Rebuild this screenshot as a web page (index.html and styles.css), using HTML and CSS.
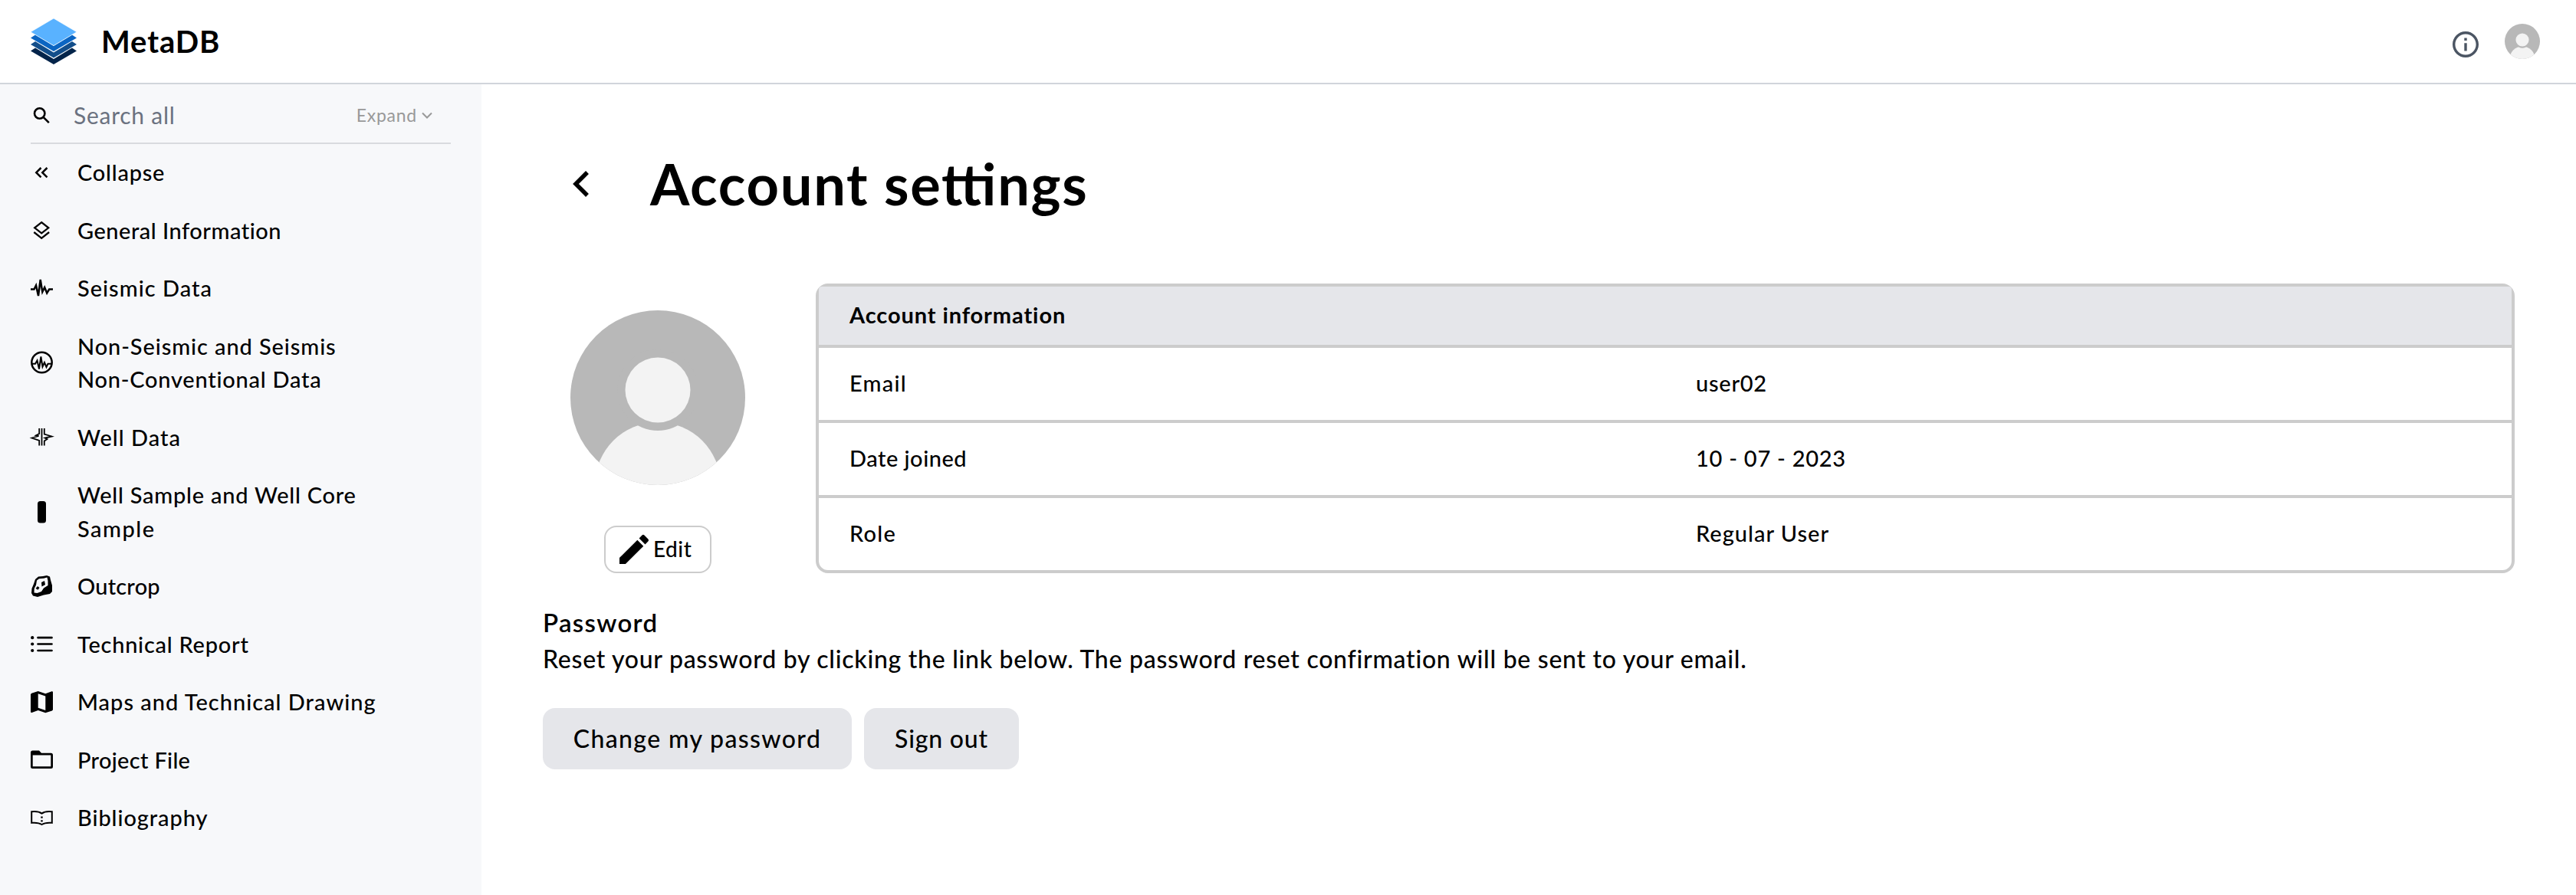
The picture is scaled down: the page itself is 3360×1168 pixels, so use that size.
FILE: index.html
```html
<!DOCTYPE html>
<html lang="en">
<head>
<meta charset="utf-8">
<title>MetaDB - Account settings</title>
<link rel="stylesheet" href="styles.css">
</head>
<body>
<svg class="defs" aria-hidden="true">
  <symbol id="person" viewBox="0 0 228 228">
    <clipPath id="disc"><circle cx="114" cy="114" r="114"/></clipPath>
    <g clip-path="url(#disc)">
      <rect width="228" height="228" fill="#b8b8b8"/>
      <circle cx="114" cy="228" r="82" fill="#f3f3f3"/>
      <rect x="32" y="228" width="164" height="10" fill="#f3f3f3"/>
      <circle cx="114" cy="104" r="53" fill="#b8b8b8"/>
      <circle cx="114" cy="104" r="42.5" fill="#f3f3f3"/>
    </g>
  </symbol>
</svg>

<header class="topbar">
  <a class="brand">
    <svg class="logo" viewBox="0 0 60 60">
      <path fill="#04244a" d="M0 42.500 6 38.500 30 53 54 38.500 60 42.500 30 60z"/>
      <path fill="#134e8a" d="M0 34 6 30 30 44.500 54 30 60 34 30 51.500z"/>
      <path fill="#0b65c2" d="M0 25.500 6 21.500 30 36 54 21.500 60 25.500 30 43z"/>
      <path fill="#59b2ff" stroke="#fff" stroke-width=".6" d="M30 0 60 17.700 30 35.500 0 17.700z"/>
    </svg>
    <span class="brand-name">MetaDB</span>
  </a>
  <div class="top-actions">
    <svg class="info" viewBox="2 2 20 20"><path d="M11 7h2v2h-2zm0 4h2v6h-2zm1-9C6.480 2 2 6.480 2 12s4.480 10 10 10 10-4.480 10-10S17.520 2 12 2zm0 18c-4.410 0-8-3.590-8-8s3.590-8 8-8 8 3.590 8 8-3.590 8-8 8z"/></svg>
    <svg class="avatar-small"><use href="#person"/></svg>
  </div>
</header>

<div class="layout">
  <nav class="sidebar">
    <div class="search">
      <svg class="icon" viewBox="0 0 28 28"><g fill="none" stroke="#000" stroke-width="2.600"><circle cx="11.700" cy="11" r="6.700"/><path d="M16.500 15.800 23.800 23.200"/></g></svg>
      <span class="search-label">Search all</span>
      <span class="expand">Expand</span>
      <svg class="expand-icon" viewBox="0 0 14 10"><path d="M1 1.500 7 7.500 13 1.500" fill="none" stroke="#999" stroke-width="2"/></svg>
    </div>
    <ul class="menu">
      <li><svg class="icon" viewBox="0 0 28 28"><path d="M13.500 8 7.300 14.200 13.500 20.400M21.500 8 15.300 14.200 21.500 20.400" fill="none" stroke="#000" stroke-width="2.500"/></svg><span class="t-75">Collapse</span></li>
      <li><svg class="icon" viewBox="0 0 28 28"><path d="M14.200 4.200 23.200 11.300 14.200 18.400 5.200 11.300zM4.300 17 14.200 24.800 24.100 17" fill="none" stroke="#000" stroke-width="2.300"/></svg><span class="t-50">General Information</span></li>
      <li><svg class="icon" viewBox="0 0 28 28"><path d="M0 15.500H4.500L7 10.500 10 24 12.700 3 15.300 19 18.200 13 21.200 20.500 24.200 15.500H29" fill="none" stroke="#000" stroke-width="2.500"/></svg><span class="t-100">Seismic Data</span></li>
      <li><svg class="icon" viewBox="0 0 28 28"><circle cx="14.500" cy="14" r="13.200" fill="none" stroke="#000" stroke-width="2.500"/><path d="M2 15.800H6L8.500 11.500 11 22.500 13.400 6.500 15.500 19.500 18 14 20.500 20 22.500 15.800H27" fill="none" stroke="#000" stroke-width="2"/></svg><span class="t-90"><span>Non-Seismic and Seismis</span><br><span class="t-75">Non-Conventional Data</span></span></li>
      <li><svg class="icon" viewBox="0 0 28 28"><path d="M14.500 3V25.500M11.200 3V10L7 12.200 10.500 13 1.500 15.500 11.200 19V25.500M17.800 3V10.500L27.500 13.500 18.500 15.500 21.500 17 17.800 19.500V25.500" fill="none" stroke="#000" stroke-width="1.800"/></svg><span class="t-100">Well Data</span></li>
      <li><svg class="icon" viewBox="0 0 28 28"><rect x="9" y="0" width="11" height="28.600" rx="3.500"/></svg><span class="t-75">Well Sample and Well Core<br><span class="t-140">Sample</span></span></li>
      <li><svg class="icon" viewBox="0 0 28 28"><path d="M6 5 10 1.500 16 1 21 0 25 1.500 26 6 28 13 28 21 25 24 17 25.500 9 28 3 26.500 1 23 1.500 17 4 11z"/><path fill="#f7f8fa" d="M8 6.500 11 4.200 17 3.800 21.500 2.500 22.500 7 22.500 13 17 16.500 14 21 8.500 23 4.500 22.500 4.700 17 7 12.500z"/><path d="M14 9 18 7 19 12 14.500 14.500zM9 14 11.500 16 9.500 18.700 6.500 17z"/></svg><span class="t-20">Outcrop</span></li>
      <li><svg class="icon" viewBox="0 0 28 28"><g stroke="#000" stroke-width="2.700" stroke-linecap="round"><path d="M9.500 6.200H27.500M9.500 14.500H27.500M9.500 23H27.500"/></g><circle cx="2.200" cy="6.200" r="2.100"/><circle cx="2.200" cy="14.500" r="2.100"/><circle cx="2.200" cy="23" r="2.100"/></svg><span class="t-75">Technical Report</span></li>
      <li><svg class="icon" viewBox="0 0 28 28"><path fill-rule="evenodd" d="M1.200 2.700 9.700 0 19.300 3.300 27.500 .2Q29 0 29 1.200V24.300L28 25.500 19.300 28.200 9.700 24.900 1.500 28Q0 28.200 0 27V4zM9.700 3.200V21.700L19.300 25V6.500z"/></svg><span class="t-100">Maps and Technical Drawing</span></li>
      <li><svg class="icon" viewBox="0 0 28 28"><path fill-rule="evenodd" d="M2.500 2.500H11L14 5.800H26.500Q29 5.800 29 8.300V23.500Q29 26 26.500 26H2.500Q0 26 0 23.500V5Q0 2.500 2.500 2.500zM2.700 8.500V23.300H26.300V8.500z"/></svg><span class="t-30">Project File</span></li>
      <li><svg class="icon" viewBox="0 0 28 28"><path d="M1.200 6.200Q10 5.200 14.500 8.600 19 5.200 27.800 6.200V20.800Q19 20 14.500 23 10 20 1.200 20.800z" fill="none" stroke="#000" stroke-width="2"/><path d="M13.300 12.500h2.400v2.300h-2.400zM13.300 17.300h2.400v2.300h-2.400z"/></svg><span class="t-90">Bibliography</span></li>
    </ul>
  </nav>

  <main class="content">
    <div class="heading">
      <svg class="back" viewBox="0 0 22 34"><path d="M19 2 4 17 19 32" fill="none" stroke="#000" stroke-width="5.500"/></svg>
      <h1>Account settings</h1>
    </div>

    <section class="account">
      <div class="profile">
        <svg class="avatar"><use href="#person"/></svg>
        <button class="edit">
          <svg class="pencil" viewBox="3 3 18 18"><path d="M3 17.250V21h3.750L17.810 9.930l-3.750-3.750L3 17.250zM20.710 7.040a1 1 0 0 0 0-1.410l-2.340-2.340a1 1 0 0 0-1.410 0l-1.830 1.830 3.750 3.750 1.830-1.830z"/></svg>
          <span>Edit</span>
        </button>
      </div>
      <div class="info-table">
        <div class="row head"><span class="t-90">Account information</span></div>
        <div class="row"><span class="t-120">Email</span><span class="t-75">user02</span></div>
        <div class="row"><span class="t-50">Date joined</span><span class="t-75">10 - 07 - 2023</span></div>
        <div class="row"><span class="t-120">Role</span><span class="t-100">Regular User</span></div>
      </div>
    </section>

    <section class="password">
      <h2>Password</h2>
      <p>Reset your password by clicking the link below. The password reset confirmation will be sent to your email.</p>
      <div class="buttons">
        <button class="btn btn-change">Change my password</button>
        <button class="btn btn-signout">Sign out</button>
      </div>
    </section>
  </main>
</div>
</body>
</html>
```
FILE: styles.css
```css
* { box-sizing: border-box; }

body {
  margin: 0;
  min-height: 1168px;
  display: flex;
  flex-direction: column;
  background: #fff;
  color: #000;
  font-family: Lato, "Open Sans", sans-serif;
  font-size: 29px;
  font-weight: 500;
  line-height: 43.5px;
}

h1, h2, p, ul { margin: 0; padding: 0; }
svg { display: block; flex: none; overflow: visible; }
button { font: inherit; color: inherit; }
.defs { position: absolute; width: 0; height: 0; }

/* letter spacing steps */
.t-20 { letter-spacing: .2px; }
.t-30 { letter-spacing: .3px; }
.t-50 { letter-spacing: .5px; }
.t-75 { letter-spacing: .75px; }
.t-90 { letter-spacing: .9px; }
.t-100 { letter-spacing: 1px; }
.t-120 { letter-spacing: 1.25px; }
.t-140 { letter-spacing: 1.5px; }

/* top bar */
.topbar {
  height: 110px;
  padding: 0 47px 0 40px;
  display: flex;
  align-items: center;
  justify-content: space-between;
  border-bottom: 2px solid #d1d5db;
}
.brand { display: flex; align-items: center; gap: 32px; }
.logo { width: 60px; height: 60px; }
.brand-name { padding-top: 1px; font-size: 40px; font-weight: 700; letter-spacing: .9px; }
.top-actions { display: flex; align-items: center; gap: 34px; }
.info { width: 34px; height: 34px; margin-top: 8px; fill: #4b5563; }
.avatar-small { width: 46px; height: 46px; }

/* sidebar */
.layout { flex: 1; display: flex; }
.sidebar { width: 628px; padding: 0 40px; background: #f7f8fa; }
.search {
  height: 78px;
  padding: 5px 24px 0 0;
  display: flex;
  align-items: center;
  border-bottom: 2px solid #d9dbde;
}
.search-label { flex: 1; margin-left: 28px; color: #6b7280; font-size: 30px; font-weight: 400; letter-spacing: .75px; }
.expand { margin-right: 6px; color: #999; font-size: 23px; font-weight: 400; letter-spacing: .75px; }
.expand-icon { width: 14px; height: 10px; }
.icon { width: 28px; height: 28px; }
.menu { list-style: none; margin-top: -1px; }
.menu li { padding: 16px 0; display: flex; align-items: center; gap: 33px; white-space: nowrap; }

/* content */
.content { flex: 1; padding: 86px 80px 0; }
.heading { height: 88px; display: flex; align-items: center; }
.back { width: 22px; height: 34px; margin: 0 79px 0 39px; }
h1 {
  font-size: 74px;
  line-height: 88px;
  font-weight: 700;
  letter-spacing: 1.7px;
  font-feature-settings: "liga" 1;
}

.account { margin-top: 86px; display: grid; grid-template-columns: 300px 1fr; column-gap: 56px; }
.profile { padding-top: 35px; display: flex; flex-direction: column; align-items: center; justify-content: space-between; }
.avatar { width: 228px; height: 228px; }
.edit {
  width: 140px;
  height: 62px;
  padding: 0 0 0 18px;
  display: flex;
  align-items: center;
  gap: 6px;
  border: 2px solid #ccc;
  border-radius: 16px;
  background: #fff;
  font-size: 28px;
  letter-spacing: .5px;
}
.pencil { width: 38px; height: 38px; }

.info-table { border: 4px solid #ccc; border-radius: 16px; }
.row {
  height: 98px;
  padding-bottom: 2px;
  display: grid;
  grid-template-columns: 1fr 1fr;
  align-items: center;
  border-bottom: 4px solid #ccc;
}
.row:last-child { height: 94px; border-bottom: 0; }
.row span { padding-left: 40px; }
.head { height: 80px; background: #e5e6ea; border-radius: 4px 4px 0 0; font-weight: 700; }

.password { margin-top: 40px; font-size: 32px; line-height: 48px; }
h2 { font-size: 33px; line-height: 48px; font-weight: 600; letter-spacing: 1.3px; }
.password p { letter-spacing: .72px; }
.buttons { margin-top: 40px; display: flex; gap: 16px; }
.btn { height: 80px; padding: 0; border: 0; border-radius: 16px; background: #e5e6ea; }
.btn-change { width: 403px; letter-spacing: 1.38px; }
.btn-signout { width: 202px; letter-spacing: .8px; }
```
